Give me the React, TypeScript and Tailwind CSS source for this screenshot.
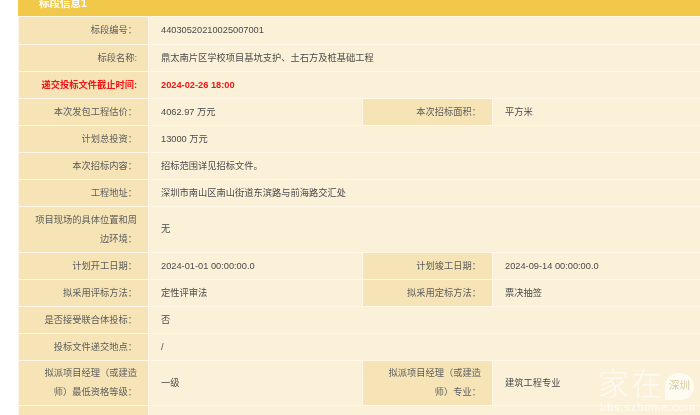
const font = { fontFamily: '"Liberation Sans", "Noto Sans CJK SC", sans-serif' };

function Label({ children, red }: { children: React.ReactNode; red?: boolean }) {
  return (
    <td className={`border border-[#fff8e9] bg-[#f6e4b6] pl-3 pr-[11px] text-right leading-[19px] ${red ? "font-bold text-[#f01414]" : "text-[#5c5c5c]"}`}>
      {children}
    </td>
  );
}

function Value({ children, span, red }: { children: React.ReactNode; span?: number; red?: boolean }) {
  return (
    <td colSpan={span} className={`border border-[#fff8e9] bg-[#fbf1d8] px-3 leading-[19px] ${red ? "font-bold text-[#f01414]" : "text-[#4a4a4a]"}`}>
      {children}
    </td>
  );
}

type Row = { h?: string; cells: [string, string, string?, string?]; red?: boolean };

const rows: Row[] = [
  { h: "h-[28px]", cells: ["标段编号：", "44030520210025007001"] },
  { cells: ["标段名称:", "鼎太南片区学校项目基坑支护、土石方及桩基础工程"] },
  { cells: ["递交投标文件截止时间:", "2024-02-26 18:00"], red: true },
  { cells: ["本次发包工程估价：", "4062.97 万元", "本次招标面积：", "平方米"] },
  { cells: ["计划总投资：", "13000 万元"] },
  { cells: ["本次招标内容：", "招标范围详见招标文件。"] },
  { cells: ["工程地址：", "深圳市南山区南山街道东滨路与前海路交汇处"] },
  { h: "h-[46px]", cells: ["项目现场的具体位置和周边环境：", "无"] },
  { cells: ["计划开工日期：", "2024-01-01 00:00:00.0", "计划竣工日期：", "2024-09-14 00:00:00.0"] },
  { cells: ["拟采用评标方法：", "定性评审法", "拟采用定标方法：", "票决抽签"] },
  { cells: ["是否接受联合体投标：", "否"] },
  { cells: ["投标文件递交地点：", "/"] },
  { h: "h-[45px]", cells: ["拟派项目经理（或建造师）最低资格等级：", "一级", "拟派项目经理（或建造师）专业：", "建筑工程专业"] },
  { cells: ["", ""] },
];

export default function App() {
  return (
    <div className="relative h-[415px] w-[700px] overflow-hidden bg-white" style={font}>
      <div className="-mt-[11px] ml-[18px] blur-[0.4px]">
        <div className="flex h-[27px] items-center bg-[#f2c84b] pl-[21px] pt-[2px] text-[10.5px] font-bold text-white">标段信息1</div>
        <table className="w-[682px] table-fixed border-collapse text-[9.25px]">
          <colgroup>
            <col className="w-[130px]" />
            <col className="w-[214px]" />
            <col className="w-[130px]" />
            <col className="w-[208px]" />
          </colgroup>
          <tbody>
            {rows.map((r, i) => (
              <tr key={i} className={r.h ?? "h-[27px]"}>
                <Label red={r.red}>{r.cells[0]}</Label>
                {r.cells[2] ? (
                  <>
                    <Value>{r.cells[1]}</Value>
                    <Label>{r.cells[2]}</Label>
                    <Value>{r.cells[3]}</Value>
                  </>
                ) : (
                  <Value span={3} red={r.red}>{r.cells[1]}</Value>
                )}
              </tr>
            ))}
          </tbody>
        </table>
      </div>
      <div className="absolute right-[5px] top-[367px] flex w-[97px] flex-col blur-[0.4px]">
        <div className="flex items-center">
          <span className="text-[31px] font-light leading-[35px] tracking-[2px] text-white/65">家在</span>
          <span className="ml-[1px] mt-[3px] flex h-[27px] w-[29px] items-center justify-center rounded-full rounded-bl-[5px] bg-white/70 text-[10.5px] text-[#d8c8a0]">深圳</span>
        </div>
        <span className="pl-[2px] text-[11px] leading-[11px] tracking-[0.9px] text-white/75">bbs.szhome.com</span>
      </div>
    </div>
  );
}
